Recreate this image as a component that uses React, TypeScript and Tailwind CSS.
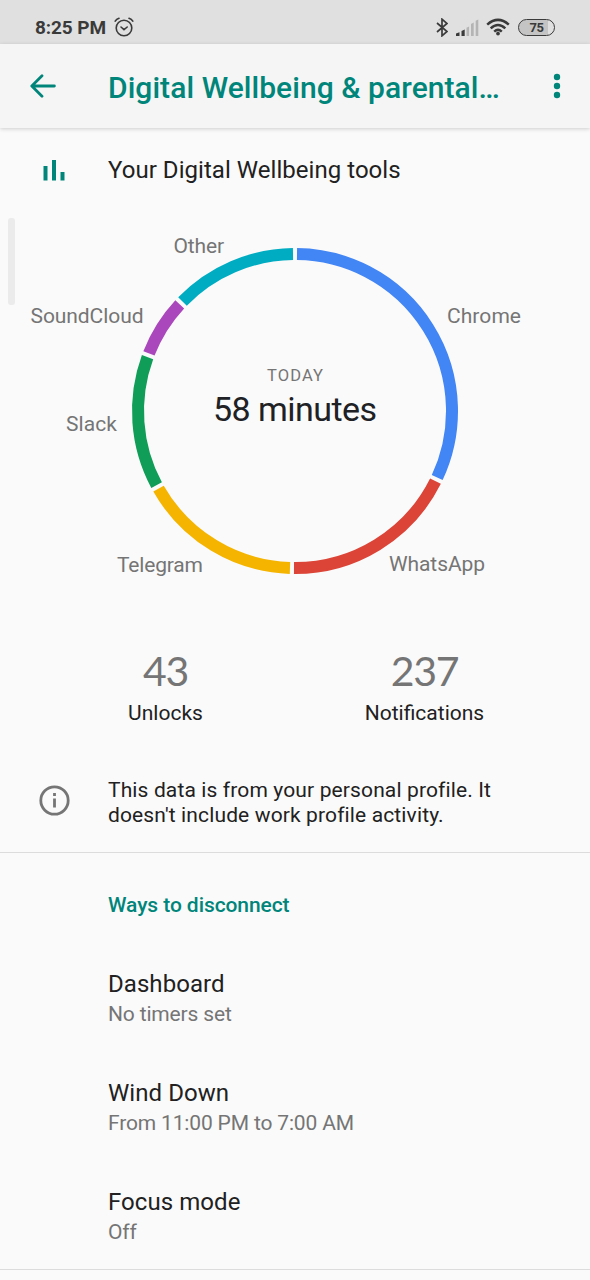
import React from "react";

const slices = [
  { name: "Chrome", from: 0, to: 115.8, color: "#4285f4", x: 447, y: 111, width: 74 },
  { name: "WhatsApp", from: 115.8, to: 181.1, color: "#db4437", x: 389, y: 359, width: 96 },
  { name: "Telegram", from: 181.1, to: 241.1, color: "#f4b400", x: 117, y: 360, width: 86 },
  { name: "Slack", from: 241.1, to: 290.8, color: "#0f9d58", x: 66, y: 218.5, width: 51 },
  { name: "SoundCloud", from: 290.8, to: 313.5, color: "#ab47bc", x: 30.5, y: 111, width: 113 },
  { name: "Other", from: 313.5, to: 360, color: "#00acc1", x: 173.5, y: 41, width: 50.5 },
];

const stats = [
  { value: "43", label: "Unlocks" },
  { value: "237", label: "Notifications" },
];

const options = [
  { title: "Dashboard", summary: "No timers set" },
  { title: "Wind Down", summary: "From 11:00 PM to 7:00 AM" },
  { title: "Focus mode", summary: "Off" },
];

const CX = 295;
const CY = 199;
const R = 157;

const point = (deg: number) => {
  const a = ((deg - 90) * Math.PI) / 180;
  return `${CX + R * Math.cos(a)} ${CY + R * Math.sin(a)}`;
};

const arc = (from: number, to: number) =>
  `M${point(from + 0.73)} A${R} ${R} 0 ${to - from > 180 ? 1 : 0} 1 ${point(to - 0.73)}`;

const StatusBar = () => (
  <div className="flex h-11 items-center justify-between bg-[#e0e0e0] pr-[35px] pl-[35px] pt-2.5 text-[#3a3a3a]">
    <div className="flex items-center gap-2">
      <span className="pt-0.5 text-[19px] leading-6 font-bold tracking-[-0.1px]">8:25 PM</span>
      <svg width="20" height="20" viewBox="0 0 20 20" fill="none" stroke="currentColor" strokeWidth="1.6" strokeLinecap="round">
        <circle cx="10" cy="11" r="7.8" />
        <path d="M7 10l3 2.6 3.2-2.6M1.2 4.2Q2.4 2 5 1.2M18.8 4.2Q17.6 2 15 1.2" />
      </svg>
    </div>
    <div className="flex items-center">
      <svg width="12" height="19" viewBox="0 0 12 19" fill="none" stroke="currentColor" strokeWidth="1.7">
        <path d="M1 5l10 8.500-5 4.300V1.200l5 4.300L1 14" />
      </svg>
      <svg className="ml-2" width="23" height="17" viewBox="0 0 23 17" fill="currentColor">
        <path d="M0 14.500l3.500-1.200V17H0zM5.500 12l3.200-1.500V17H5.500z" />
        <path fill="#b4b4b4" d="M10.500 8.700l2.600-1.300V17h-2.600zM15 5l2.700-1.400V17H15zM19.700 1.800L22.300.5V17h-2.600z" />
      </svg>
      <svg className="ml-[7px]" width="24" height="18" viewBox="0 0 24 18" fill="none" stroke="currentColor" strokeWidth="2.5">
        <path d="M1.200 6.600Q12-2.800 22.800 6.600M4.700 10.300Q12 3.600 19.300 10.300M8.200 13.600Q12 10.200 15.800 13.600" />
        <circle cx="12" cy="15.600" r="1.900" fill="currentColor" stroke="none" />
      </svg>
      <div className="ml-2 flex h-[17px] w-[37px] items-center justify-center rounded-full border-[1.5px] border-[#3a3a3a] bg-[linear-gradient(90deg,#c4c4c4_82%,#e0e0e0_82%)] text-[13px] leading-none font-bold tracking-[-0.5px]">
        75
      </div>
    </div>
  </div>
);

const Header = () => (
  <div className="flex h-[84px] items-center bg-[#f5f5f5] pl-[30px] text-[#00857a] shadow-[0_1px_4px_rgba(0,0,0,0.18)]">
    <svg width="26" height="24" viewBox="0 0 26 24" fill="none" stroke="currentColor" strokeWidth="2.8" strokeLinecap="round" strokeLinejoin="round">
      <path d="M12 1.8L1.8 12 12 22.2M2 12h22.4" />
    </svg>
    <h1 className="ml-[52px] pt-0.5 text-[30px] font-medium tracking-[0.06px] whitespace-nowrap">
      Digital Wellbeing &amp; parental…
    </h1>
    <svg className="ml-auto mr-[29px] shrink-0" width="8" height="26" viewBox="0 0 8 26" fill="currentColor">
      <circle cx="4" cy="4" r="3.2" />
      <circle cx="4" cy="13" r="3.2" />
      <circle cx="4" cy="22" r="3.2" />
    </svg>
  </div>
);

const UsageChart = () => (
  <svg className="block" width="590" height="410" viewBox="0 0 590 410">
    {slices.map((s) => (
      <g key={s.name}>
        <path d={arc(s.from, s.to)} fill="none" stroke={s.color} strokeWidth="12" />
        <text x={s.x} y={s.y} textLength={s.width} fontSize="21" fill="#757575">
          {s.name}
        </text>
      </g>
    ))}
    <text x="267" y="169" textLength="56" fontSize="16.500" fill="#757575">
      TODAY
    </text>
    <text x="213" y="209" textLength="164" fontSize="34" fill="#202124">
      58 minutes
    </text>
    <rect x="8" y="6" width="7" height="87" rx="3" fill="#ebebeb" />
  </svg>
);

const App = () => {
  return (
    <div className="h-[1280px] w-[590px] overflow-hidden bg-[#fafafa] font-[Roboto,sans-serif] text-[#212121]">
      <StatusBar />
      <Header />

      <div className="flex h-[84px] items-center pl-[43px]">
        <svg width="22" height="22" viewBox="0 0 22 22" fill="#00857a">
          <path d="M.5 7h4v14.500h-4zM9 1h4v20.500H9zM17.500 13h4v8.500h-4z" />
        </svg>
        <h2 className="ml-[43px] text-2xl tracking-[0.04px]">Your Digital Wellbeing tools</h2>
      </div>

      <UsageChart />

      <div className="flex h-[156px] px-[36px] pt-6">
        {stats.map((stat) => (
          <div key={stat.label} className="flex w-[259px] flex-col items-center">
            <p className="font-[Lato,sans-serif] text-[41px] leading-[50px] tracking-[-1.2px] text-[#757575]">
              {stat.value}
            </p>
            <p className="pt-px text-[21px] leading-8">{stat.label}</p>
          </div>
        ))}
      </div>

      <div className="flex h-[75px] items-start border-b border-[#dcdcdc] pl-[39px]">
        <svg className="mt-[7px]" width="31" height="31" viewBox="0 0 31 31" fill="none" stroke="#757575" strokeWidth="2.8">
          <circle cx="15.500" cy="15.500" r="13.700" />
          <path d="M15.500 13.500v9M15.500 8v3" />
        </svg>
        <p className="ml-[38px] w-[420px] text-[21px] leading-[25px] tracking-[0.13px] [font-variant-ligatures:common-ligatures]">
          This data is from your personal profile. It
          <br />
          doesn't include work profile activity.
        </p>
      </div>

      <div className="h-[417px] border-b border-[#dcdcdc] pl-[108px] pt-9">
        <h3 className="text-[21px] leading-8 font-medium tracking-[-0.08px] text-[#00857a]">
          Ways to disconnect
        </h3>
        <div className="flex flex-col gap-[49px] pt-[47px]">
          {options.map((option) => (
            <div key={option.title}>
              <p className="text-2xl leading-8 tracking-[0.06px]">{option.title}</p>
              <p className="text-[21px] leading-7 tracking-[-0.16px] text-[#757575]">{option.summary}</p>
            </div>
          ))}
        </div>
      </div>
    </div>
  );
};

export default App;
